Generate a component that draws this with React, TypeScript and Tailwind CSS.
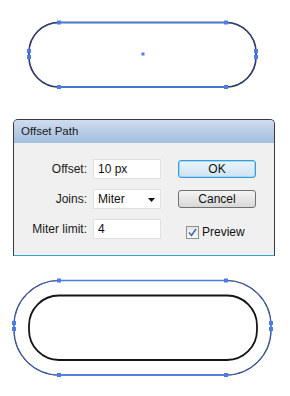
import React from "react";

const BLUE = "#4a7de6";

function Anchor({ x, y }: { x: number; y: number }) {
  return <rect x={x - 2} y={y - 2} width={4} height={4} fill={BLUE} />;
}

function TopShape() {
  // rounded rect x 29..256, y 22..87, radius 30
  const d =
    "M59 22.5 H226 A30 30 0 0 1 256 52.5 V57 A30 30 0 0 1 226 87 H59 A30 30 0 0 1 29 57 V52.5 A30 30 0 0 1 59 22.5 Z";
  return (
    <svg width="290" height="119" className="block">
      <path d={d} fill="none" stroke="#1b1f3a" strokeWidth="1.6" />
      <path d="M59 22.5 H226 M59 87 H226" stroke={BLUE} strokeWidth="1.6" />
      <path d={d} fill="none" stroke={BLUE} strokeWidth="0.6" opacity="0.7" />
      <Anchor x={59} y={22.5} />
      <Anchor x={226} y={22.5} />
      <Anchor x={59} y={87} />
      <Anchor x={226} y={87} />
      <Anchor x={29} y={51} />
      <Anchor x={29} y={57} />
      <Anchor x={256} y={51} />
      <Anchor x={256} y={57} />
      <rect x={141.5} y={52.5} width={3} height={3} fill={BLUE} />
    </svg>
  );
}

function BottomShape() {
  // outer x 14..273, y 24..119 (svg coords), radius 45
  const outer =
    "M59 24.5 H226 A45 45 0 0 1 271 69.5 V74 A45 45 0 0 1 226 119 H59 A45 45 0 0 1 14 74 V69.5 A45 45 0 0 1 59 24.5 Z";
  const inner =
    "M59 39.5 H227 A30 30 0 0 1 257 69.5 V74 A30 30 0 0 1 227 104 H59 A30 30 0 0 1 29 74 V69.5 A30 30 0 0 1 59 39.5 Z";
  return (
    <svg width="290" height="140" className="block">
      <path d={inner} fill="none" stroke="#151515" strokeWidth="1.8" />
      <path d={outer} fill="none" stroke="#2a2f55" strokeWidth="1.2" />
      <path d={outer} fill="none" stroke={BLUE} strokeWidth="0.8" opacity="0.8" />
      <path d="M59 24.5 H226 M59 119 H226" stroke={BLUE} strokeWidth="1.6" />
      <Anchor x={59} y={24.5} />
      <Anchor x={226} y={24.5} />
      <Anchor x={59} y={119} />
      <Anchor x={226} y={119} />
      <Anchor x={14} y={67} />
      <Anchor x={14} y={73} />
      <Anchor x={271} y={67} />
      <Anchor x={271} y={73} />
    </svg>
  );
}

function Label({ children }: { children: React.ReactNode }) {
  return (
    <div className="w-[73px] text-right text-[12px] text-[#1a1a1a] leading-none">
      {children}
    </div>
  );
}

function Input({ value, dropdown }: { value: string; dropdown?: boolean }) {
  return (
    <div className="ml-[6px] w-[68px] h-[20px] bg-white border border-[#e0e0e0] flex items-center pl-[4px] text-[12px] text-[#111] relative">
      {value}
      {dropdown && (
        <svg
          width="7"
          height="4"
          className="absolute right-[5px] top-[8px]"
          viewBox="0 0 7 4"
        >
          <path d="M0 0 H7 L3.5 4 Z" fill="#111" />
        </svg>
      )}
    </div>
  );
}

export default function App() {
  return (
    <div
      className="w-[290px] h-[396px] bg-white flex flex-col overflow-hidden"
      style={{ fontFamily: '"Liberation Sans", Arial, sans-serif' }}
    >
      <TopShape />
      <div className="ml-[13px] w-[262px] h-[137px] flex flex-col border border-[#3a3a3a] border-b-[#3f9fd0] rounded-t-[5px] overflow-hidden bg-[#f0f0f0]">
        <div className="h-[23px] bg-gradient-to-b from-[#cfdcee] to-[#a3bedf] flex items-center pl-[7px] text-[11.5px] text-[#1a1a1a]">
          Offset Path
        </div>
        <div className="flex flex-col gap-[10px] pt-[16px]">
          <div className="flex items-center h-[20px]">
            <Label>Offset:</Label>
            <Input value="10 px" />
            <div className="ml-[17px] w-[78px] h-[18px] rounded-[3px] border border-[#3c9ad6] bg-gradient-to-b from-[#eaf5fc] to-[#cfe3f1] flex items-center justify-center text-[12px] text-[#111] shadow-[inset_0_0_0_1px_#9ed8f5]">
              OK
            </div>
          </div>
          <div className="flex items-center h-[20px]">
            <Label>Joins:</Label>
            <Input value="Miter" dropdown />
            <div className="ml-[17px] w-[78px] h-[18px] rounded-[3px] border border-[#707070] bg-gradient-to-b from-[#f4f4f4] to-[#d8d8d8] flex items-center justify-center text-[12px] text-[#111]">
              Cancel
            </div>
          </div>
          <div className="flex items-center h-[20px]">
            <Label>Miter limit:</Label>
            <Input value="4" />
            <div className="ml-[25px] flex items-center gap-[3px] pt-[6px]">
              <div className="w-[13px] h-[13px] border border-[#8f8f8f] bg-gradient-to-b from-[#e6e6e6] to-[#fbfbfb] flex items-center justify-center">
                <svg width="9" height="9" viewBox="0 0 9 9">
                  <path
                    d="M1 4.5 L3.5 7.5 L8 1"
                    fill="none"
                    stroke="#4a68b5"
                    strokeWidth="1.6"
                  />
                </svg>
              </div>
              <span className="text-[12px] text-[#111]">Preview</span>
            </div>
          </div>
        </div>
      </div>
      <BottomShape />
    </div>
  );
}
